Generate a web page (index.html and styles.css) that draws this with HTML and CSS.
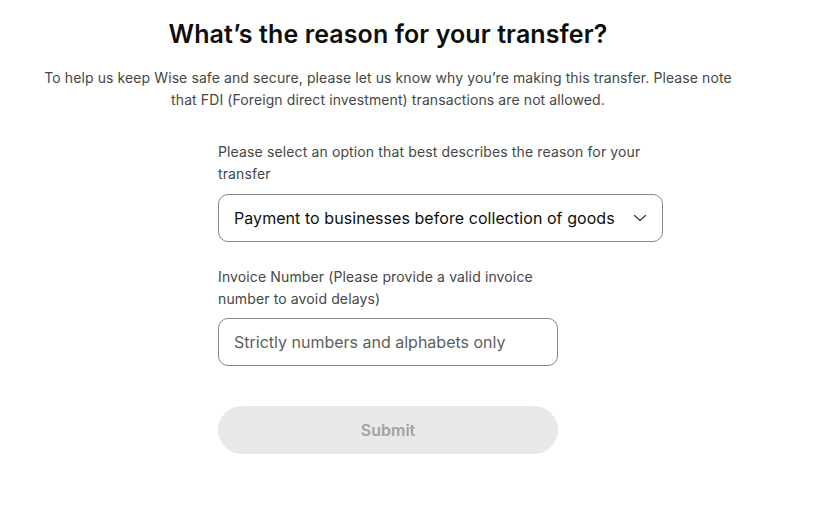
FILE: index.html
```html
<!DOCTYPE html>
<html lang="en">
<head>
    <meta charset="UTF-8">
    <meta name="viewport" content="width=device-width, initial-scale=1.0">
    <title>Transfer reason</title>
    <link rel="stylesheet" href="styles.css">
</head>
<body>
<div class="page">
    <h1 class="title">What’s the reason for your transfer?</h1>
    <p class="intro">To help us keep Wise safe and secure, please let us know why you’re making this transfer. Please note that FDI (Foreign direct investment) transactions are not allowed.</p>

    <form class="reason-form">
        <div class="field">
            <label class="field-label" for="reason">Please select an option that best describes the reason for your transfer</label>
            <div class="select-box" id="reason">
                <span>Payment to businesses before collection of goods</span>
                <svg class="chevron" width="16" height="16" viewBox="0 0 16 16">
                    <path d="M2.5 5.5 L8 10.5 L13.5 5.5" fill="none" stroke="#3a3a3a" stroke-width="1.2" stroke-linecap="round" stroke-linejoin="round"/>
                </svg>
            </div>
        </div>

        <div class="field narrow">
            <label class="field-label tight" for="invoice">Invoice Number (Please provide a valid invoice number to avoid delays)</label>
            <input type="text" id="invoice" class="text-input" placeholder="Strictly numbers and alphabets only">
        </div>

        <button type="button" class="submit-btn" disabled>Submit</button>
    </form>
</div>
</body>
</html>
```

FILE: styles.css
```css
body {
    margin: 0;
    font-family: Inter, "Noto Sans", sans-serif;
    background: #fff;
    color: #0e0f0c;
}

.page {
    width: 776px;
    padding-top: 18px;
}

.title {
    margin: 0;
    font-size: 25px;
    line-height: 32px;
    font-weight: 600;
    letter-spacing: 0.1px;
    text-align: center;
    color: #0e0f0c;
}

.intro {
    margin: 17px auto 0;
    width: 710px;
    font-size: 14px;
    line-height: 22px;
    letter-spacing: 0.1px;
    text-align: center;
    color: #454745;
}

.reason-form {
    margin: 30px 0 0 218px;
    width: 445px;
}

.field {
    margin-bottom: 24px;
}

.field.narrow {
    width: 340px;
    margin-bottom: 40px;
}

.field-label {
    display: block;
    font-size: 14px;
    line-height: 22px;
    letter-spacing: 0.13px;
    color: #454745;
    margin-bottom: 9px;
}

.field-label.tight {
    margin-bottom: 8px;
}

.select-box {
    display: flex;
    align-items: center;
    justify-content: space-between;
    height: 48px;
    box-sizing: border-box;
    padding: 0 14px 0 15px;
    border: 1px solid #868685;
    border-radius: 10px;
    font-size: 16px;
    letter-spacing: 0.06px;
    color: #0e0f0c;
}

.text-input {
    display: block;
    width: 100%;
    height: 48px;
    box-sizing: border-box;
    padding: 0 15px;
    border: 1px solid #868685;
    border-radius: 10px;
    font-family: inherit;
    font-size: 16px;
    outline: none;
}

.text-input::placeholder {
    color: #5d5f5c;
}

.submit-btn {
    display: block;
    width: 340px;
    height: 48px;
    border: none;
    border-radius: 24px;
    background: #e8e8e8;
    color: #a3a3a3;
    font-family: inherit;
    font-size: 16px;
    font-weight: 600;
}
```
